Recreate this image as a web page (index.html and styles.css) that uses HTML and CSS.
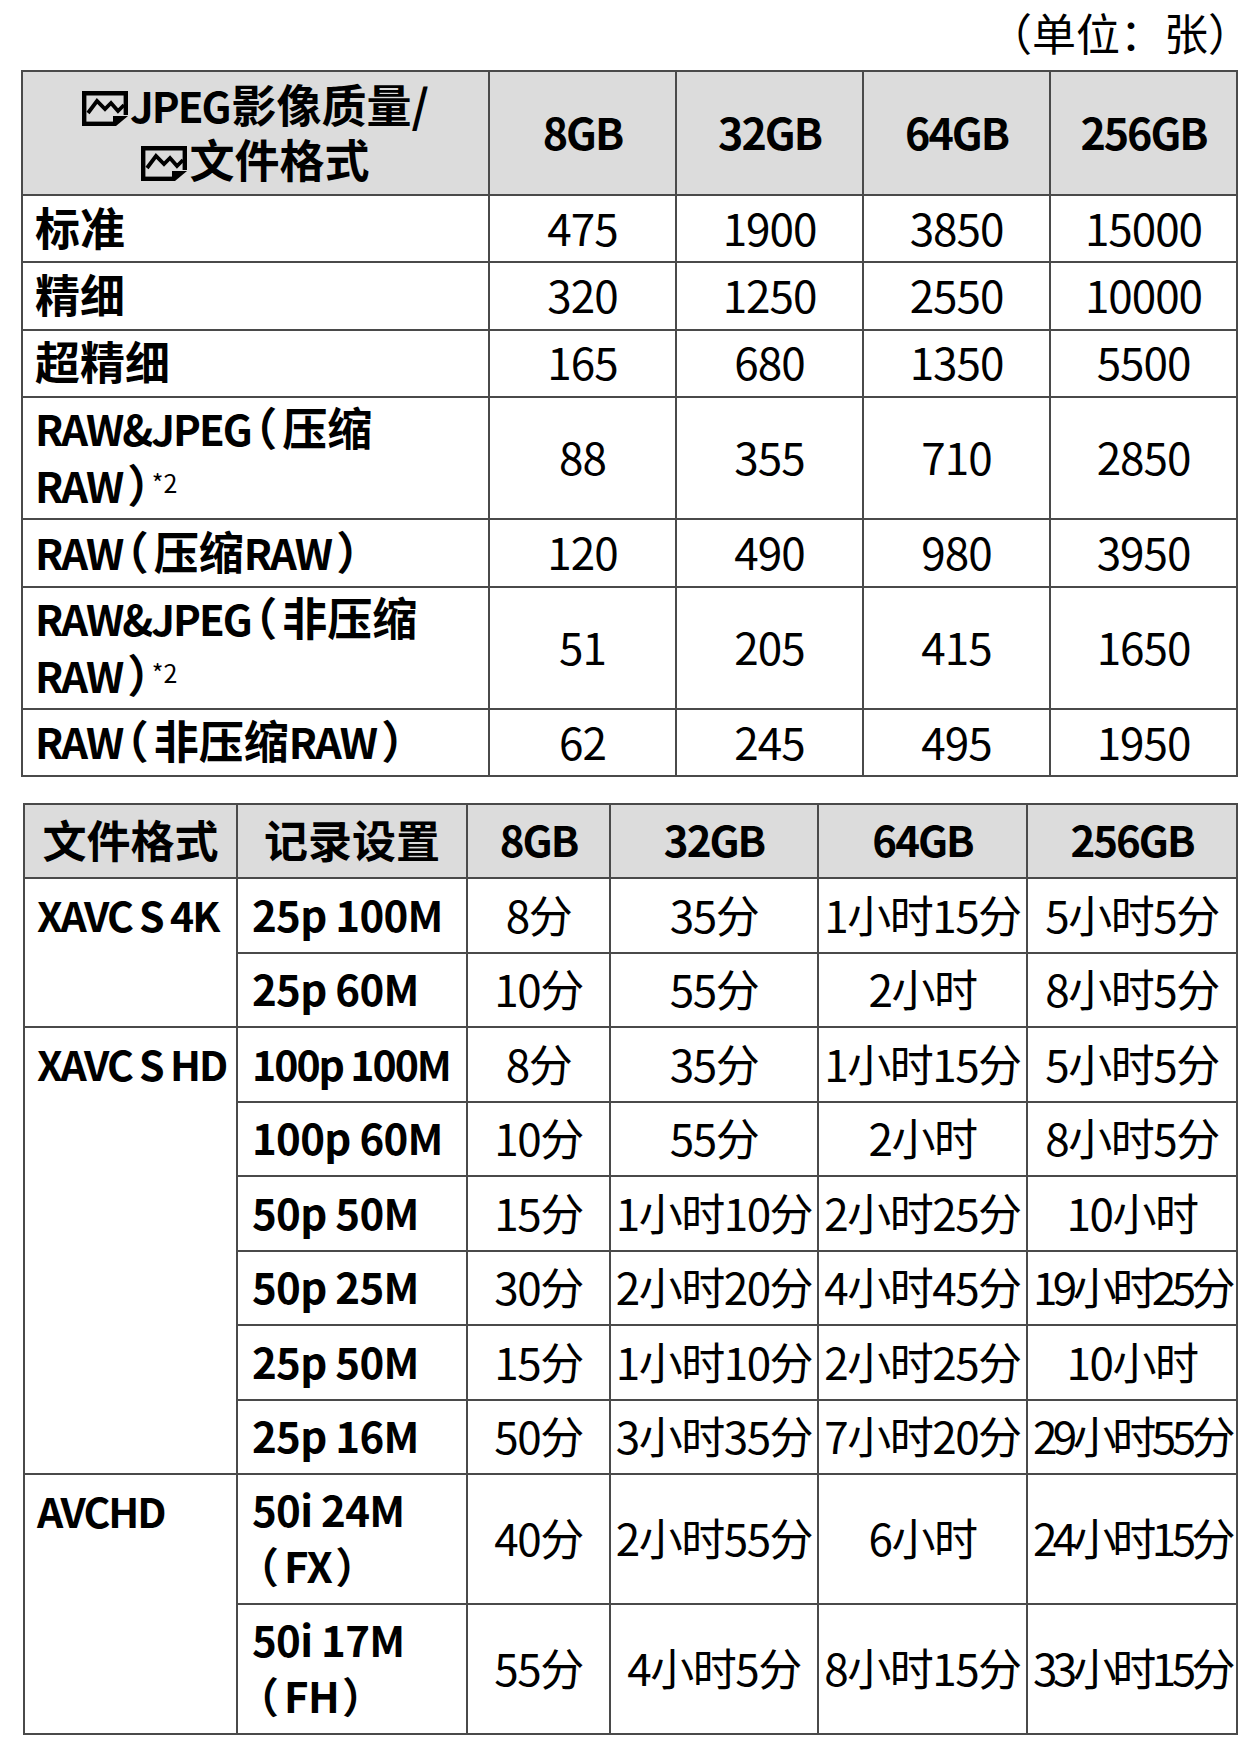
FILE: index.html
```html
<!DOCTYPE html>
<html lang="zh-CN">
<head>
<meta charset="utf-8">
<title>记录容量</title>
<link rel="stylesheet" href="styles.css">
</head>
<body>
<div class="page">
  <div class="unit">（单位：张）</div>
  <table class="t1">
    <colgroup>
      <col class="c-label"><col class="c-num"><col class="c-num"><col class="c-num"><col class="c-num">
    </colgroup>
    <thead>
      <tr class="h1">
        <th class="hlabel"><svg class="ico" viewBox="0 0 46 35" width="46" height="35"><path d="M2.2 35V2.2H43.8V24" fill="none" stroke="#000" stroke-width="4.4"/><path d="M2.2 32.8H31" fill="none" stroke="#000" stroke-width="4.4"/><polygon points="31,25 46,25 34,35 31,35" fill="#000"/><polyline points="6,22 15,10 23,18 29,12 36,20 42,14" fill="none" stroke="#000" stroke-width="3.8"/></svg><span class="lat">JPEG</span>影像质量/<br><svg class="ico" viewBox="0 0 46 35" width="46" height="35"><path d="M2.2 35V2.2H43.8V24" fill="none" stroke="#000" stroke-width="4.4"/><path d="M2.2 32.8H31" fill="none" stroke="#000" stroke-width="4.4"/><polygon points="31,25 46,25 34,35 31,35" fill="#000"/><polyline points="6,22 15,10 23,18 29,12 36,20 42,14" fill="none" stroke="#000" stroke-width="3.8"/></svg>文件格式</th>
        <th class="gb">8GB</th><th class="gb">32GB</th><th class="gb">64GB</th><th class="gb">256GB</th>
      </tr>
    </thead>
    <tbody>
      <tr class="r1"><th>标准</th><td>475</td><td>1900</td><td>3850</td><td>15000</td></tr>
      <tr class="r1"><th>精细</th><td>320</td><td>1250</td><td>2550</td><td>10000</td></tr>
      <tr class="r1"><th>超精细</th><td>165</td><td>680</td><td>1350</td><td>5500</td></tr>
      <tr class="r2"><th><span class="lat">RAW&amp;JPEG</span><span class="lp">（</span>压缩<br><span class="lat">RAW</span><span class="rp">）</span><span class="note">*2</span></th><td>88</td><td>355</td><td>710</td><td>2850</td></tr>
      <tr class="r1"><th><span class="lat">RAW</span><span class="lp">（</span>压缩<span class="lat">RAW</span><span class="rp">）</span></th><td>120</td><td>490</td><td>980</td><td>3950</td></tr>
      <tr class="r2"><th><span class="lat">RAW&amp;JPEG</span><span class="lp">（</span>非压缩<br><span class="lat">RAW</span><span class="rp">）</span><span class="note">*2</span></th><td>51</td><td>205</td><td>415</td><td>1650</td></tr>
      <tr class="r1"><th><span class="lat">RAW</span><span class="lp">（</span>非压缩<span class="lat">RAW</span><span class="rp">）</span></th><td>62</td><td>245</td><td>495</td><td>1950</td></tr>
    </tbody>
  </table>

  <table class="t2">
    <colgroup>
      <col class="k1"><col class="k2"><col class="k3"><col class="k4"><col class="k5"><col class="k6">
    </colgroup>
    <thead>
      <tr class="h2"><th>文件格式</th><th>记录设置</th><th class="gb">8GB</th><th class="gb">32GB</th><th class="gb">64GB</th><th class="gb">256GB</th></tr>
    </thead>
    <tbody>
      <tr class="v1"><th class="fmt" rowspan="2">XAVC S 4K</th><th class="set">25p 100M</th><td>8分</td><td>35分</td><td>1小时15分</td><td>5小时5分</td></tr>
      <tr class="v1"><th class="set">25p 60M</th><td>10分</td><td>55分</td><td>2小时</td><td>8小时5分</td></tr>
      <tr class="v1"><th class="fmt" rowspan="6">XAVC S HD</th><th class="set set-tight">100p 100M</th><td>8分</td><td>35分</td><td>1小时15分</td><td>5小时5分</td></tr>
      <tr class="v1"><th class="set">100p 60M</th><td>10分</td><td>55分</td><td>2小时</td><td>8小时5分</td></tr>
      <tr class="v1"><th class="set">50p 50M</th><td>15分</td><td>1小时10分</td><td>2小时25分</td><td>10小时</td></tr>
      <tr class="v1"><th class="set">50p 25M</th><td>30分</td><td>2小时20分</td><td>4小时45分</td><td class="tight">19小时25分</td></tr>
      <tr class="v1"><th class="set">25p 50M</th><td>15分</td><td>1小时10分</td><td>2小时25分</td><td>10小时</td></tr>
      <tr class="v1"><th class="set">25p 16M</th><td>50分</td><td>3小时35分</td><td>7小时20分</td><td class="tight">29小时55分</td></tr>
      <tr class="v2"><th class="fmt" rowspan="2">AVCHD</th><th class="set">50i 24M<br><span class="lp">（</span>FX<span class="rp">）</span></th><td>40分</td><td>2小时55分</td><td>6小时</td><td class="tight">24小时15分</td></tr>
      <tr class="v2"><th class="set">50i 17M<br><span class="lp">（</span>FH<span class="rp">）</span></th><td>55分</td><td>4小时5分</td><td>8小时15分</td><td class="tight">33小时15分</td></tr>
    </tbody>
  </table>
</div>
</body>
</html>
```

FILE: styles.css
```css
html, body {
  margin: 0;
  padding: 0;
  background: #ffffff;
}

body {
  font-family: "Noto Sans CJK SC", "Noto Sans", sans-serif;
  color: #000000;
}

.page {
  padding-left: 21px;
  width: 1215px;
}

.unit {
  height: 70px;
  line-height: 64px;
  font-size: 44px;
  text-align: right;
  margin-right: -16px;
}

table {
  border-collapse: collapse;
  table-layout: fixed;
}

th, td {
  border: 2px solid #4a4a4a;
  padding: 0 0 4px 0;
}

/* condensed latin runs */
.lat {
  font-size: 0.93em;
  letter-spacing: -2px;
  margin-right: 2px;
}

.gb {
  letter-spacing: -2px;
}

/* half-width brackets */
.lp {
  font-feature-settings: "halt" 1;
  margin-left: 2px;
  margin-right: 5px;
}

.rp {
  font-feature-settings: "halt" 1;
  margin-left: 3px;
}

/* ---------- Table 1 ---------- */
.t1 {
  width: 1215px;
}

.t1 .c-label { width: 467px; }
.t1 .c-num { width: 187px; }

.t1 thead th {
  background: #dcdcdc;
  font-weight: 700;
  font-size: 45px;
  line-height: 54px;
  text-align: center;
}

.t1 thead th.gb {
  font-size: 43px;
}

.h1 { height: 124px; }

.ico {
  display: inline-block;
  vertical-align: -3px;
  margin-right: 2px;
}

.t1 tbody th {
  font-weight: 700;
  font-size: 45px;
  line-height: 56px;
  text-align: left;
  padding-left: 12px;
  white-space: nowrap;
}

.t1 tbody td {
  font-size: 44px;
  line-height: 52px;
  letter-spacing: -1px;
  text-align: center;
  font-weight: 400;
}

.r1 { height: 67.3px; }
.r2 { height: 122.5px; }

.note {
  display: inline-block;
  font-size: 25px;
  font-weight: 400;
  line-height: 24px;
  vertical-align: 10px;
  margin-left: 2px;
  letter-spacing: 0;
}

/* ---------- Table 2 ---------- */
.t2 {
  width: 1213px;
  margin-left: 2px;
  margin-top: 26px;
}

.t2 .k1 { width: 213px; }
.t2 .k2 { width: 230px; }
.t2 .k3 { width: 143px; }
.t2 .k4 { width: 208px; }
.t2 .k5 { width: 209px; }
.t2 .k6 { width: 210px; }

.t2 thead th {
  background: #dcdcdc;
  font-weight: 700;
  font-size: 44px;
  line-height: 54px;
  text-align: center;
}

.t2 thead th.gb {
  font-size: 42px;
}

.h2 { height: 74px; }
.v1 { height: 74.5px; }
.v2 { height: 130px; }

.t2 .fmt {
  font-weight: 700;
  font-size: 41px;
  letter-spacing: -2px;
  line-height: 70px;
  text-align: left;
  vertical-align: top;
  padding-left: 12px;
  white-space: nowrap;
}

.t2 .set {
  font-weight: 700;
  font-size: 42px;
  letter-spacing: -0.7px;
  line-height: 56px;
  text-align: left;
  padding-left: 14px;
  white-space: nowrap;
}

.t2 .set-tight {
  font-size: 41px;
  letter-spacing: -2px;
}

.t2 .set .lp,
.t2 .set .rp {
  letter-spacing: 0;
}

.t2 .set .lp {
  margin-left: 6px;
}

.t2 td {
  font-size: 44px;
  line-height: 52px;
  letter-spacing: -1.5px;
  text-align: center;
  white-space: nowrap;
}

.t2 td.tight {
  letter-spacing: -4.5px;
}
```
